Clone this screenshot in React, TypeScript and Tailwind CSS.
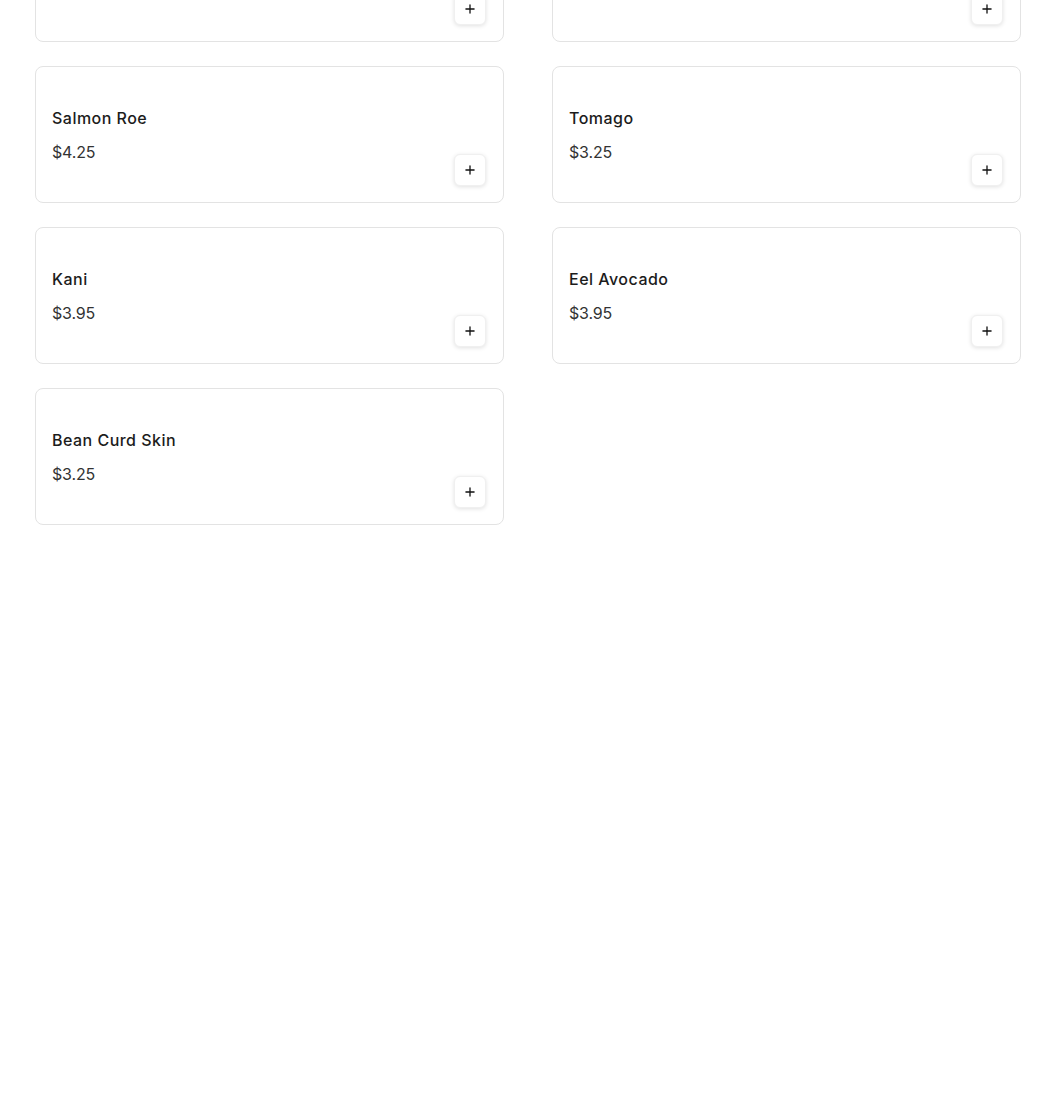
import React from 'react';
import { Plus } from 'lucide-react';

type Item = { name: string; price: string };

const items: Item[] = [
  { name: 'Salmon Skin', price: '$3.95' },
  { name: 'Ika', price: '$3.25' },
  { name: 'Salmon Roe', price: '$4.25' },
  { name: 'Tomago', price: '$3.25' },
  { name: 'Kani', price: '$3.95' },
  { name: 'Eel Avocado', price: '$3.95' },
  { name: 'Bean Curd Skin', price: '$3.25' },
];

const ItemCard = ({ item }: { item: Item }) => (
  <div className="h-[137px] flex justify-between rounded-lg border border-[#e3e3e3] bg-white p-4">
    <div className="flex flex-col pt-[23px]">
      <h3 className="text-[16px] leading-6 font-medium tracking-[0.03em] text-[#1c1c1c]">{item.name}</h3>
      <p className="mt-[10px] text-[16px] leading-6 tracking-[-0.01em] text-[#333]">{item.price}</p>
    </div>
    <button className="self-end mr-px w-8 h-8 flex items-center justify-center rounded-md border border-[#f0f0f0] bg-white shadow-[0_1px_4px_rgba(0,0,0,0.12)]">
      <Plus className="w-[14px] h-[14px] text-[#111]" strokeWidth={2.25} />
    </button>
  </div>
);

export default function App() {
  return (
    <div className="min-h-screen bg-white" style={{ fontFamily: 'Inter, "Noto Sans", sans-serif' }}>
      <div className="-mt-[95px] pl-[35px] pr-[29px] grid grid-cols-2 gap-x-[48px] gap-y-6">
        {items.map((it) => (
          <ItemCard key={it.name} item={it} />
        ))}
      </div>
    </div>
  );
}
